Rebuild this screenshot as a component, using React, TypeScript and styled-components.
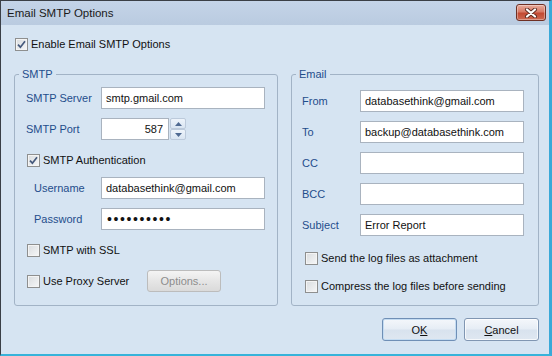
import styled, { createGlobalStyle } from 'styled-components';

const GlobalStyle = createGlobalStyle`
  html, body {
    margin: 0;
    padding: 0;
    width: 552px;
    height: 356px;
    overflow: hidden;
  }
  body {
    font-family: "Liberation Sans", Arial, sans-serif;
    font-size: 11px;
    color: #1b1b1b;
  }
  * {
    box-sizing: border-box;
  }
`;

const BLUE_LABEL = '#1f4d8c';

export default function App() {
  return (
    <>
      <GlobalStyle />
      <Window>
        <TitleBar>
          <Title>Email SMTP Options</Title>
          <CloseButton>
            <svg width="14" height="10" viewBox="0 0 14 10">
              <path d="M3 1.5 L11 8.5 M11 1.5 L3 8.5" stroke="#5a2a20" strokeWidth="4" strokeLinecap="round" />
              <path d="M3 1.5 L11 8.5 M11 1.5 L3 8.5" stroke="#ffffff" strokeWidth="2.2" strokeLinecap="round" />
            </svg>
          </CloseButton>
        </TitleBar>

        <Body>
          <CheckRow $mt={0} $ml={1}>
            <CheckBox checked />
            <span>Enable Email SMTP Options</span>
          </CheckRow>

          <Groups>
            <Group $width={264}>
              <Legend>SMTP</Legend>
              <FieldRow $mt={6} $labelW={86}>
                <FieldLabel $indent={11}>SMTP Server</FieldLabel>
                <TextBox readOnly value="smtp.gmail.com" />
              </FieldRow>
              <FieldRow $mt={9} $labelW={86}>
                <FieldLabel $indent={11}>SMTP Port</FieldLabel>
                <PortWrap>
                  <PortBox readOnly value="587" />
                  <Spinner>
                    <SpinBtn>
                      <svg width="7" height="4" viewBox="0 0 7 4">
                        <path d="M0 4 L3.5 0 L7 4 Z" fill="#4f6a92" />
                      </svg>
                    </SpinBtn>
                    <SpinBtn>
                      <svg width="7" height="4" viewBox="0 0 7 4">
                        <path d="M0 0 L3.5 4 L7 0 Z" fill="#4f6a92" />
                      </svg>
                    </SpinBtn>
                  </Spinner>
                </PortWrap>
              </FieldRow>
              <CheckRow $mt={12} $ml={12}>
                <CheckBox checked />
                <span>SMTP Authentication</span>
              </CheckRow>
              <FieldRow $mt={9} $labelW={86}>
                <FieldLabel $indent={19}>Username</FieldLabel>
                <TextBox readOnly value="databasethink@gmail.com" />
              </FieldRow>
              <FieldRow $mt={9} $labelW={86}>
                <FieldLabel $indent={19}>Password</FieldLabel>
                <PassBox type="password" readOnly value="xxxxxxxxxx" />
              </FieldRow>
              <CheckRow $mt={12} $ml={12}>
                <CheckBox />
                <span>SMTP with SSL</span>
              </CheckRow>
              <ProxyRow>
                <CheckRow $mt={0} $ml={0}>
                  <CheckBox />
                  <span>Use Proxy Server</span>
                </CheckRow>
                <OptionsButton disabled>Options...</OptionsButton>
              </ProxyRow>
            </Group>

            <Group $width={248}>
              <Legend>Email</Legend>
              <FieldRow $mt={9} $labelW={68}>
                <FieldLabel $indent={10}>From</FieldLabel>
                <TextBox readOnly value="databasethink@gmail.com" />
              </FieldRow>
              <FieldRow $mt={9} $labelW={68}>
                <FieldLabel $indent={10}>To</FieldLabel>
                <TextBox readOnly value="backup@databasethink.com" />
              </FieldRow>
              <FieldRow $mt={9} $labelW={68}>
                <FieldLabel $indent={10}>CC</FieldLabel>
                <TextBox readOnly value="" />
              </FieldRow>
              <FieldRow $mt={9} $labelW={68}>
                <FieldLabel $indent={10}>BCC</FieldLabel>
                <TextBox readOnly value="" />
              </FieldRow>
              <FieldRow $mt={9} $labelW={68}>
                <FieldLabel $indent={10}>Subject</FieldLabel>
                <TextBox readOnly value="Error Report" />
              </FieldRow>
              <CheckRow $mt={14} $ml={13}>
                <CheckBox />
                <span>Send the log files as attachment</span>
              </CheckRow>
              <CheckRow $mt={12} $ml={13}>
                <CheckBox />
                <span>Compress the log files before sending</span>
              </CheckRow>
            </Group>
          </Groups>

          <Footer>
            <DialogButton $default>
              O<u>K</u>
            </DialogButton>
            <DialogButton>
              <u>C</u>ancel
            </DialogButton>
          </Footer>
        </Body>
      </Window>
    </>
  );
}

function CheckBox({ checked = false }: { checked?: boolean }) {
  return (
    <Box>
      {checked && (
        <svg width="9" height="9" viewBox="0 0 9 9">
          <path d="M1 4.6 L3.4 7.2 L8 1.2" fill="none" stroke="#45597c" strokeWidth="1.7" />
        </svg>
      )}
    </Box>
  );
}

const Window = styled.div`
  width: 552px;
  height: 356px;
  display: flex;
  flex-direction: column;
  background: #d6e4f2;
  border-left: 1px solid #3a3f46;
  border-top: 1px solid #3a3f46;
  border-right: 3px solid #3aa9d8;
  border-bottom: 2px solid #37b3da;
`;

const TitleBar = styled.div`
  height: 24px;
  flex-shrink: 0;
  display: flex;
  justify-content: space-between;
  align-items: flex-start;
  padding: 0 3px 0 6px;
  background: linear-gradient(#c4d4e8, #bacbe0);
`;

const Title = styled.div`
  font-size: 11.5px;
  line-height: 24px;
  color: #1a1a1a;
`;

const CloseButton = styled.div`
  margin-top: 3px;
  width: 30px;
  height: 17px;
  display: flex;
  align-items: center;
  justify-content: center;
  border: 1px solid #6f3024;
  border-radius: 3px;
  background: linear-gradient(#e8ac9c, #d77a66 45%, #c34a33 55%, #cc6a52);
  box-shadow: inset 0 0 0 1px rgba(255, 255, 255, 0.35);
`;

const Body = styled.div`
  flex: 1;
  display: flex;
  flex-direction: column;
  padding: 11px 10px 0 13px;
`;

const CheckRow = styled.div<{ $mt: number; $ml: number }>`
  display: flex;
  align-items: center;
  gap: 3px;
  height: 16px;
  margin-top: ${(p) => p.$mt}px;
  margin-left: ${(p) => p.$ml}px;
  color: #111;
  white-space: nowrap;
`;

const Box = styled.span`
  width: 13px;
  height: 13px;
  flex-shrink: 0;
  display: flex;
  align-items: center;
  justify-content: center;
  border: 1px solid #8e8f8f;
  background: linear-gradient(135deg, #d9dcdf, #f6f7f8);
  box-shadow: inset 0 0 0 1px #f4f4f4;
`;

const Groups = styled.div`
  display: flex;
  gap: 13px;
  margin-top: 15px;
`;

const Group = styled.fieldset<{ $width: number }>`
  width: ${(p) => p.$width}px;
  flex-shrink: 0;
  height: 239px;
  margin: 0;
  padding: 0;
  border: 1px solid #a2b3c6;
  border-radius: 3px;
  display: flex;
  flex-direction: column;
`;

const Legend = styled.legend`
  margin-left: 4px;
  padding: 0 3px;
  font-size: 11px;
  line-height: 14px;
  color: ${BLUE_LABEL};
`;

const FieldRow = styled.div<{ $mt: number; $labelW: number }>`
  display: grid;
  grid-template-columns: ${(p) => p.$labelW}px 164px;
  align-items: center;
  height: 22px;
  margin-top: ${(p) => p.$mt}px;
`;

const FieldLabel = styled.label<{ $indent: number }>`
  padding-left: ${(p) => p.$indent}px;
  color: ${BLUE_LABEL};
  white-space: nowrap;
`;

const TextBox = styled.input`
  width: 164px;
  height: 22px;
  margin: 0;
  padding: 0 4px;
  border: 1px solid #a9b3bf;
  background: #fff;
  font-family: "Liberation Sans", Arial, sans-serif;
  font-size: 11px;
  color: #111;
  outline: none;
`;

const PassBox = styled(TextBox)`
  font-size: 14px;
  letter-spacing: 1.6px;
  padding-left: 5px;
`;

const PortWrap = styled.div`
  display: flex;
  align-items: center;
  gap: 1px;
`;

const PortBox = styled(TextBox)`
  width: 68px;
  text-align: right;
  padding-right: 5px;
`;

const Spinner = styled.div`
  display: flex;
  flex-direction: column;
  width: 16px;
  height: 22px;
`;

const SpinBtn = styled.div`
  flex: 1;
  display: flex;
  align-items: center;
  justify-content: center;
  border: 1px solid #bccadb;
  border-radius: 2px;
  background: linear-gradient(#eef4fb, #d9e5f2);
`;

const ProxyRow = styled.div`
  display: grid;
  grid-template-columns: 120px 74px;
  align-items: center;
  height: 22px;
  margin-top: 12px;
  margin-left: 12px;
`;

const OptionsButton = styled.button`
  width: 74px;
  height: 22px;
  padding: 0;
  border: 1px solid #bcbcbc;
  border-radius: 3px;
  background: linear-gradient(#f4f4f4, #e6e6e6 50%, #dadada);
  font-family: "Liberation Sans", Arial, sans-serif;
  font-size: 11px;
  color: #8d8d8d;
`;

const Footer = styled.div`
  display: flex;
  justify-content: flex-end;
  gap: 7px;
  margin-top: 12px;
`;

const DialogButton = styled.button<{ $default?: boolean }>`
  width: 75px;
  height: 23px;
  padding: 0;
  border: 1px solid ${(p) => (p.$default ? '#6f8fb6' : '#8096b2')};
  border-radius: 3px;
  background: linear-gradient(#f4f7fb, #e6edf5 48%, #d8e2ee 52%, #dfe7f1);
  box-shadow: inset 0 0 0 1px ${(p) => (p.$default ? '#c4dcf2' : 'rgba(255,255,255,0.7)')};
  font-family: "Liberation Sans", Arial, sans-serif;
  font-size: 11px;
  color: #111;
`;
